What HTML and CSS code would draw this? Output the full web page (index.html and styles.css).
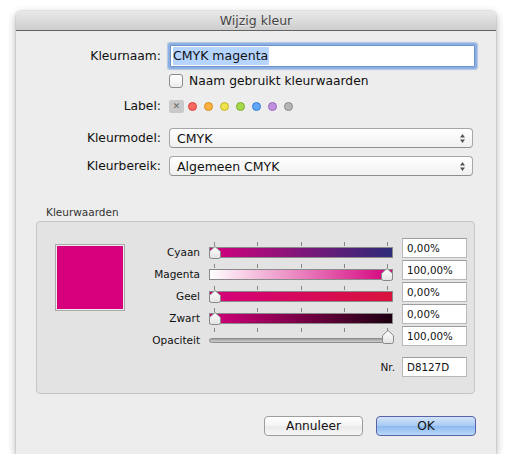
FILE: index.html
```html
<!DOCTYPE html>
<html lang="nl">
<head>
<meta charset="utf-8">
<title>Wijzig kleur</title>
<link rel="stylesheet" href="styles.css">
</head>
<body>
<div class="window">
  <div class="titlebar">Wijzig kleur</div>
  <div class="content">
    <div class="row row-name">
      <span class="lbl">Kleurnaam:</span>
      <div class="textfield"><span class="sel">CMYK magenta</span></div>
    </div>
    <div class="row row-check">
      <span class="lbl"></span>
      <span class="checkbox"></span>
      <span class="check-text">Naam gebruikt kleurwaarden</span>
    </div>
    <div class="row row-label">
      <span class="lbl">Label:</span>
      <div class="labels">
        <span class="xbox">&#x2715;</span>
        <span class="dot d-red"></span>
        <span class="dot d-orange"></span>
        <span class="dot d-yellow"></span>
        <span class="dot d-green"></span>
        <span class="dot d-blue"></span>
        <span class="dot d-purple"></span>
        <span class="dot d-gray"></span>
      </div>
    </div>
    <div class="row row-pop1">
      <span class="lbl">Kleurmodel:</span>
      <div class="popup"><span>CMYK</span>
        <svg class="stepper" width="7" height="11" viewBox="0 0 7 11"><path d="M3.5 1 L6 4.5 H1 Z M3.5 10 L6 6.5 H1 Z" fill="#555"/></svg>
      </div>
    </div>
    <div class="row row-pop2">
      <span class="lbl">Kleurbereik:</span>
      <div class="popup"><span>Algemeen CMYK</span>
        <svg class="stepper" width="7" height="11" viewBox="0 0 7 11"><path d="M3.5 1 L6 4.5 H1 Z M3.5 10 L6 6.5 H1 Z" fill="#555"/></svg>
      </div>
    </div>

    <div class="group-title">Kleurwaarden</div>
    <div class="group">
      <div class="swatch"></div>
      <div class="sliders">
        <div class="s-label">Cyaan</div>
        <div class="slider">
          <div class="ticks"><i></i><i></i><i></i><i></i><i></i></div>
          <div class="track tr-cyaan"></div>
          <svg class="thumb at-min" width="12" height="13" viewBox="0 0 12 13"><defs><linearGradient id="tg1" x1="0" y1="0" x2="0" y2="1"><stop offset="0" stop-color="#ffffff"/><stop offset="1" stop-color="#e2e2e2"/></linearGradient></defs><path d="M6 .5 L11.5 5.5 V10.5 Q11.5 12.5 9.5 12.5 H2.5 Q.5 12.5 .5 10.5 V5.5 Z" fill="url(#tg1)" stroke="#878787"/></svg>
        </div>
        <div class="field">0,00%</div>

        <div class="s-label">Magenta</div>
        <div class="slider">
          <div class="ticks"><i></i><i></i><i></i><i></i><i></i></div>
          <div class="track tr-magenta"></div>
          <svg class="thumb at-max" width="12" height="13" viewBox="0 0 12 13"><path d="M6 .5 L11.5 5.5 V10.5 Q11.5 12.5 9.5 12.5 H2.5 Q.5 12.5 .5 10.5 V5.5 Z" fill="url(#tg1)" stroke="#878787"/></svg>
        </div>
        <div class="field">100,00%</div>

        <div class="s-label">Geel</div>
        <div class="slider">
          <div class="ticks"><i></i><i></i><i></i><i></i><i></i></div>
          <div class="track tr-geel"></div>
          <svg class="thumb at-min" width="12" height="13" viewBox="0 0 12 13"><path d="M6 .5 L11.5 5.5 V10.5 Q11.5 12.5 9.5 12.5 H2.5 Q.5 12.5 .5 10.5 V5.5 Z" fill="url(#tg1)" stroke="#878787"/></svg>
        </div>
        <div class="field">0,00%</div>

        <div class="s-label">Zwart</div>
        <div class="slider">
          <div class="ticks"><i></i><i></i><i></i><i></i><i></i></div>
          <div class="track tr-zwart"></div>
          <svg class="thumb at-min" width="12" height="13" viewBox="0 0 12 13"><path d="M6 .5 L11.5 5.5 V10.5 Q11.5 12.5 9.5 12.5 H2.5 Q.5 12.5 .5 10.5 V5.5 Z" fill="url(#tg1)" stroke="#878787"/></svg>
        </div>
        <div class="field">0,00%</div>

        <div class="s-label">Opaciteit</div>
        <div class="slider slider-thin">
          <div class="ticks"><i></i><i></i><i></i><i></i><i></i></div>
          <div class="track tr-opacity"></div>
          <svg class="thumb at-max" width="12" height="14" viewBox="0 0 12 14"><path d="M6 .5 L11.5 5.5 V11.5 Q11.5 13.5 9.5 13.5 H2.5 Q.5 13.5 .5 11.5 V5.5 Z" fill="url(#tg1)" stroke="#878787"/></svg>
        </div>
        <div class="field">100,00%</div>

        <div class="nr-label">Nr.</div>
        <div class="field nr-field">D8127D</div>
      </div>
    </div>

    <div class="buttons">
      <button class="btn btn-cancel">Annuleer</button>
      <button class="btn btn-ok">OK</button>
    </div>
  </div>
</div>
</body>
</html>
```

FILE: styles.css
```css
* { box-sizing: border-box; }
html, body { margin: 0; background: #fff; }
body {
  font-family: "DejaVu Sans", "Liberation Sans", sans-serif;
  color: #111;
}

.window {
  margin: 11px 0 0 16px;
  width: 480px;
  height: 443px;
  background: #ededed;
  border-radius: 5px 5px 0 0;
  box-shadow: 0 3px 9px rgba(0,0,0,.33), 0 0 0 1px rgba(0,0,0,.06);
  display: flex;
  flex-direction: column;
  overflow: hidden;
}

.titlebar {
  height: 20px;
  line-height: 19px;
  text-align: center;
  font-size: 12.5px;
  color: #444;
  background: linear-gradient(#e9e9e9, #cdcdcd);
  border-bottom: 1px solid #646464;
  text-shadow: 0 1px 0 rgba(255,255,255,.5);
  flex: none;
}

.content {
  flex: 1;
  padding: 14px 21px 18px 0;
  display: flex;
  flex-direction: column;
}

.row { display: flex; align-items: center; gap: 8px; flex: none; }
.lbl { width: 145px; text-align: right; font-size: 12.3px; flex: none; }

.row-name { height: 22px; }
.textfield {
  margin-left: 1px;
  width: 305px;
  height: 22px;
  background: #fff;
  border: 1px solid #6f93c8;
  border-radius: 1px;
  box-shadow: 0 0 0 2px #8bb0e4, 0 0 1px 3px rgba(110,150,215,.45);
  padding: 1px 2px;
  display: flex;
  align-items: center;
}
.sel {
  background: #b5d5ff;
  font-size: 12.5px;
  line-height: 18px;
  padding-right: 1px;
}

.row-check { height: 18px; margin-top: 5px; }
.checkbox {
  width: 14px;
  height: 14px;
  border: 1px solid #8d8d8d;
  border-radius: 3px;
  background: linear-gradient(#ffffff, #ececec);
  flex: none;
}
.check-text { font-size: 12.3px; margin-left: -2px; }

.row-label { height: 18px; margin-top: 7px; }
.labels { display: flex; align-items: center; gap: 7px; }
.xbox {
  width: 15px;
  height: 13px;
  background: #c9c9c9;
  border-radius: 2px;
  font-size: 9px;
  line-height: 13px;
  text-align: center;
  color: #6a6a6a;
  margin-right: -3px;
}
.dot {
  width: 9px;
  height: 9px;
  border-radius: 50%;
  border: 1px solid;
}
.d-red { background: #fb6a62; border-color: #d4433b; }
.d-orange { background: #fbb23e; border-color: #d48d1e; }
.d-yellow { background: #efe24a; border-color: #c3b42a; }
.d-green { background: #a6d74c; border-color: #7dac2d; }
.d-blue { background: #62a6f8; border-color: #3a7ed5; }
.d-purple { background: #c18fe0; border-color: #9868b9; }
.d-gray { background: #b6b6b6; border-color: #888; }

.row-pop1 { height: 20px; margin-top: 13px; }
.row-pop2 { height: 20px; margin-top: 8px; }
.popup {
  width: 304px;
  height: 20px;
  background: linear-gradient(#ffffff, #f1f1f1);
  border: 1px solid #a6a6a6;
  border-bottom-color: #8f8f8f;
  border-radius: 4px;
  padding: 0 6px 0 7px;
  display: flex;
  align-items: center;
  justify-content: space-between;
  font-size: 12.5px;
}
.stepper { display: block; }

.group-title {
  margin: 30px 0 2px 30px;
  height: 13px;
  line-height: 13px;
  font-size: 10.5px;
  color: #333;
  flex: none;
}

.group {
  margin-left: 20px;
  width: 439px;
  height: 173px;
  background: #e3e3e3;
  border: 1px solid #c6c6c6;
  border-radius: 4px;
  padding: 16px 8px 16px 18px;
  display: flex;
  align-items: flex-start;
  flex: none;
}

.swatch {
  margin-top: 6px;
  width: 70px;
  height: 67px;
  background: #d6007d;
  border: 1px solid #a9a9a9;
  box-shadow: inset 0 0 0 1px #ececec;
  flex: none;
}

.sliders {
  display: grid;
  grid-template-columns: 75px 184px 65px;
  grid-template-rows: repeat(5, 20px) 29px;
  column-gap: 9px;
  row-gap: 2px;
}

.s-label {
  font-size: 10.5px;
  text-align: right;
  align-self: end;
  line-height: 12px;
}

.slider {
  position: relative;
  padding-top: 4px;
  display: flex;
  flex-direction: column;
}
.ticks {
  height: 4px;
  display: flex;
  justify-content: space-between;
  padding: 0 5px;
}
.ticks i { width: 1px; background: #878787; }
.track {
  margin-top: 1px;
  height: 11px;
  border: 1px solid #8a8a8a;
}
.tr-cyaan { background: linear-gradient(90deg, #d4007c, #2c2c78); }
.tr-magenta { background: linear-gradient(90deg, #ffffff, #d4007c); }
.tr-geel { background: linear-gradient(90deg, #d4007c, #d8133c); }
.tr-zwart { background: linear-gradient(90deg, #d4007c, #1c0010); }

.thumb { position: absolute; top: 8px; }
.at-min { left: 0; }
.at-max { left: calc(100% - 12px); }

.slider-thin { padding-top: 2px; }
.slider-thin .track {
  margin-top: 6px;
  height: 5px;
  border: 1px solid #8c8c8c;
  border-radius: 3px;
  background: linear-gradient(#9f9f9f, #cfcfcf);
}
.slider-thin .thumb { top: 4px; left: calc(100% - 11px); }

.field {
  background: #fff;
  border: 1px solid #b8b8b8;
  border-top-color: #9d9d9d;
  padding-left: 4px;
  font-size: 10.3px;
  line-height: 18px;
}

.nr-label {
  grid-column: 1 / span 2;
  align-self: end;
  text-align: right;
  font-size: 10.5px;
  line-height: 20px;
  margin-right: -2px;
}
.nr-field { grid-column: 3; align-self: end; height: 20px; }

.buttons {
  margin-top: 22px;
  display: flex;
  justify-content: flex-end;
  gap: 13px;
  margin-right: -1px;
}
.btn {
  height: 20px;
  border-radius: 4px;
  font-family: inherit;
  font-size: 12.2px;
  color: #111;
  padding: 0;
  line-height: 18px;
}
.btn-cancel {
  width: 99px;
  background: linear-gradient(#ffffff, #f3f3f3 50%, #e9e9e9 51%, #f6f6f6);
  border: 1px solid #9d9d9d;
}
.btn-ok {
  width: 100px;
  background: linear-gradient(#d2e4fa, #a6c9f3 50%, #8cb9ef 51%, #b9d8f8);
  border: 1px solid #5861a9;
}
```
